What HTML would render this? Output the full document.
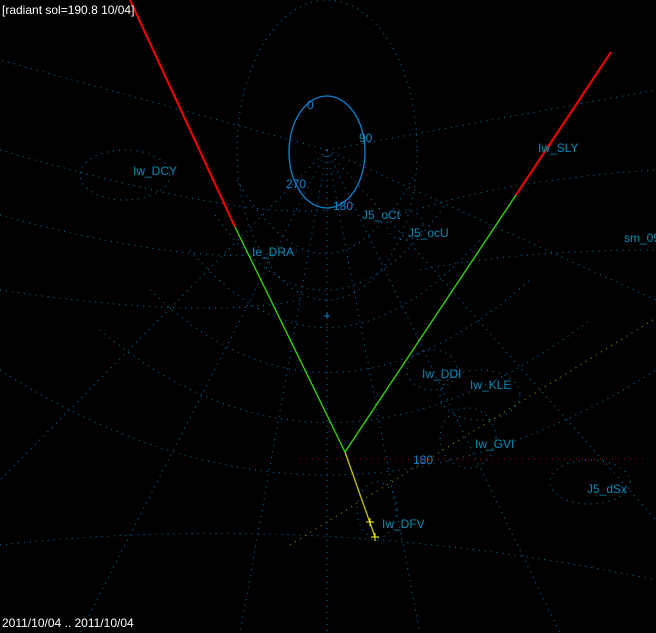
<!DOCTYPE html>
<html><head><meta charset="utf-8"><style>
html,body{margin:0;padding:0;background:#000;width:656px;height:633px;overflow:hidden}
svg{display:block}
text{font-family:"Liberation Sans",sans-serif;font-size:12px}
</style></head><body>
<svg width="656" height="633" viewBox="0 0 656 633" xmlns="http://www.w3.org/2000/svg">
<rect width="656" height="633" fill="#000"/>
<g fill="none" stroke="#0a7cc0" stroke-width="1" stroke-dasharray="1 5">
<ellipse cx="327" cy="150" rx="90" ry="150"/>
<path d="M237 180 Q327 330 415 175"/>
<path d="M215 215 Q327 370 445 205"/>
<path d="M190 250 Q327 410 480 240"/>
<path d="M150 290 Q327 460 530 280"/>
<path d="M100 330 Q327 520 590 320"/>
<path d="M0 370 Q327 580 656 370"/>
<path d="M0 545 Q320 510 656 580"/>
<path d="M0 150 Q240 220 327 210"/>
<path d="M0 215 Q200 270 300 250"/>
<path d="M0 290 Q200 320 300 300"/>
<path d="M400 215 Q500 180 656 170"/>
<path d="M420 270 Q520 250 656 250"/>
<path d="M327 150 L0 60"/><path d="M327 150 L0 480"/><path d="M327 150 L80 633"/>
<path d="M327 150 L240 633"/><path d="M327 150 L327 633"/><path d="M327 150 L420 633"/>
<path d="M327 150 L560 633"/><path d="M327 150 L656 520"/>
<path d="M327 150 L656 300"/><path d="M327 150 L656 90"/>
<ellipse cx="125" cy="175" rx="45" ry="25"/>
<ellipse cx="432" cy="370" rx="25" ry="20"/>
<ellipse cx="480" cy="395" rx="40" ry="25"/>
<ellipse cx="468" cy="438" rx="28" ry="30"/>
<ellipse cx="590" cy="482" rx="40" ry="22"/>
<ellipse cx="377" cy="510" rx="20" ry="28"/>
<ellipse cx="405" cy="225" rx="18" ry="15"/>
</g>
<ellipse cx="327" cy="152" rx="38" ry="56" fill="none" stroke="#0a84d0" stroke-width="1.3"/>
<path d="M300 459 L645 459" stroke="#c00000" stroke-dasharray="1 5"/>
<path d="M290 545 L656 318" stroke="#a0a000" stroke-dasharray="1 5"/>
<path d="M130 0 L235 227" stroke="#ff0000" stroke-width="2"/>
<path d="M235 227 L345 452" stroke="#33dd00" stroke-width="1.3"/>
<path d="M611 52 L516 195" stroke="#ff0000" stroke-width="2"/>
<path d="M516 195 L345 452" stroke="#33dd00" stroke-width="1.3"/>
<path d="M345 452 L375 537" stroke="#c8c800" stroke-width="1.3"/>
<path d="M366 522h8M370 518v8M371 537h8M375 533v8" stroke="#ffff00"/>
<path d="M324 316h6M327 313v6" stroke="#0a84d0"/>
<g fill="#0a84d0">
<text x="307" y="109">0</text><text x="359" y="142">90</text>
<text x="286" y="188">270</text><text x="333" y="210">180</text>
<text x="413" y="464">180</text>
</g>
<g fill="#0a8ab8">
<text x="133" y="175">Iw_DCY</text><text x="252" y="256">Ie_DRA</text>
<text x="362" y="219">J5_oCt</text><text x="408" y="237">J5_ocU</text>
<text x="538" y="152">Iw_SLY</text><text x="624" y="242">sm_09</text>
<text x="422" y="378">Iw_DDI</text><text x="470" y="389">Iw_KLE</text>
<text x="475" y="448">Iw_GVI</text><text x="587" y="493">J5_dSx</text>
<text x="382" y="528">Iw_DFV</text>
</g>
<g fill="#fff">
<text x="2" y="14">[radiant sol=190.8 10/04]</text>
<text x="2" y="627">2011/10/04 .. 2011/10/04</text>
</g>
</svg>
</body></html>
